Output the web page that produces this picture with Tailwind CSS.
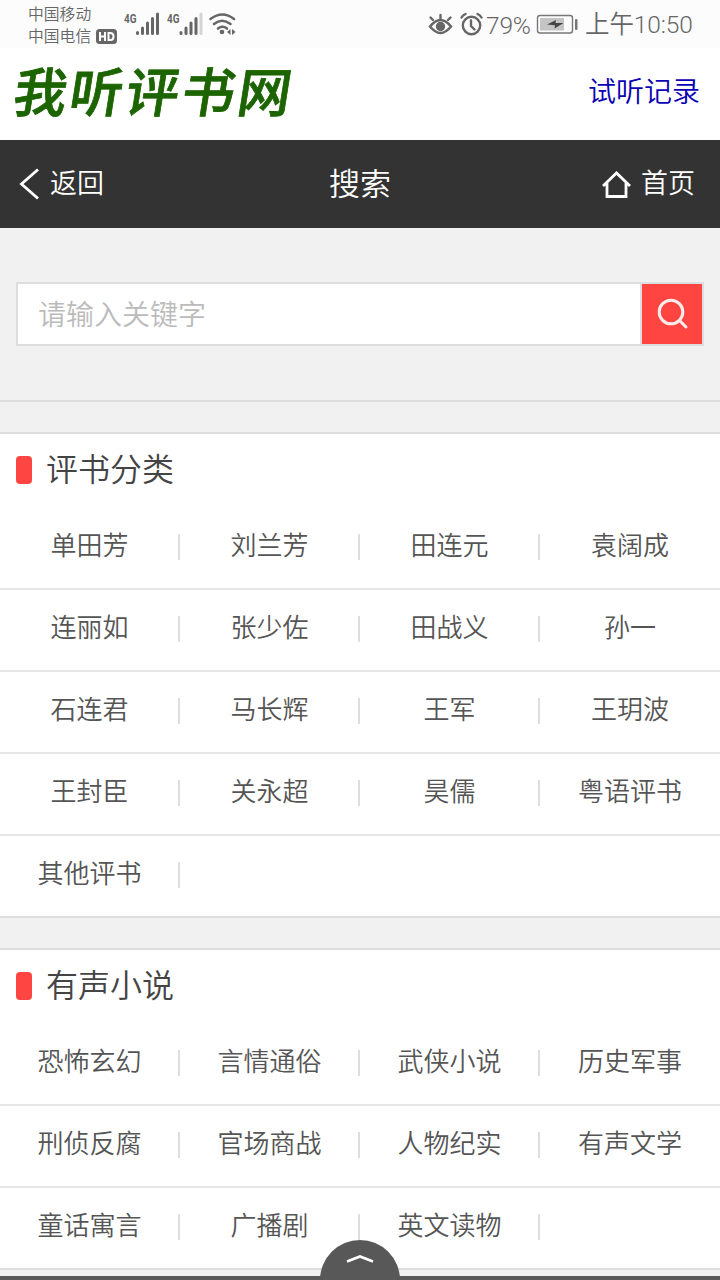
<!DOCTYPE html>
<html lang="zh-CN">
<head>
    <meta charset="UTF-8">
    <meta name="viewport" content="width=device-width, initial-scale=1.0">
    <title>搜索 - 我听评书网</title>
    <script src="https://cdn.jsdelivr.net/npm/@tailwindcss/browser@4"></script>
</head>
<body class="relative h-[1280px] overflow-hidden bg-[#f1f1f1] font-['Noto_Sans_CJK_SC',sans-serif] text-[#555]">

    <!-- Status bar -->
    <div class="flex h-12 justify-between bg-[#fcfcfc] pl-7 pr-7 text-[#666]">
        <div class="flex">
            <div class="pt-[3px] text-[15.8px] leading-[22px] font-[350]">
                <div>中国移动</div>
                <div class="flex items-center">
                    <span>中国电信</span>
                    <svg class="ml-[5px] h-[15px] w-[21px]" viewBox="0 0 21 15">
                        <rect width="21" height="15" rx="3.5" fill="#666"/>
                        <path d="M4 3v9M9 3v9M4 7.500h5M12.500 4v7h2q3 0 3-3.500t-3-3.500z" fill="none" stroke="#fcfcfc" stroke-width="2"/>
                    </svg>
                </div>
            </div>
            <!-- Signal -->
            <svg class="ml-[3px] h-12 w-[120px]" viewBox="120 0 120 48" fill="#666">
                <g font-family="Roboto, sans-serif" font-size="13" font-weight="700">
                    <text x="124" y="22.500" textLength="12.500" lengthAdjust="spacingAndGlyphs">4G</text>
                    <text x="167" y="22.500" textLength="12.500" lengthAdjust="spacingAndGlyphs">4G</text>
                </g>
                <g stroke="#666" stroke-width="3" stroke-linecap="round">
                    <path d="M137.500 32.500v1M142.500 28v5.500M147.500 23v10.500M152.500 18.500v15M157.500 14v19.500"/>
                    <path d="M181 32.500v1M186 28v5.500M191 23v10.500M196 18.500v15"/>
                    <path d="M201 14v19.500" stroke="#d4d4d4"/>
                </g>
                <g fill="none" stroke="#666" stroke-width="2.600" stroke-linecap="round">
                    <path d="M210.500 19q12-9 23.500 0M214 24q8-6.500 16.500 0M218 28.500q4.500-3.500 9 0"/>
                </g>
                <circle cx="222" cy="32" r="2.300"/>
                <path d="M230.500 29v6l-3.500-3zM232 29v6l3.500-3z"/>
            </svg>
        </div>
        <div class="flex">
            <svg class="h-12 w-[60px]" viewBox="425 0 60 48" fill="none" stroke="#666" stroke-width="2.400" stroke-linecap="round">
                <path d="M430 26.500q10.500-13 21 0q-10.500 13-21 0z"/>
                <circle cx="440.500" cy="26.500" r="3.500" fill="#666"/>
                <path d="M440.500 18.500v-3.500M433 20l-2.500-2.500M448 20l2.500-2.500"/>
                <circle cx="471.500" cy="25.500" r="8.700"/>
                <path d="M471 20.500v5.500l3.500 3.500M461.500 17.500q1.500-2.500 4-3.500M477.500 14q2.500 1 4 3.500"/>
            </svg>
            <span class="w-[45px] pl-[1px] pt-[2px] font-['Roboto',sans-serif] text-[24.500px] leading-12 font-light tracking-[-0.2px]">79%</span>
            <svg class="ml-[5px] h-12 w-[43px]" viewBox="535 0 43 48">
                <rect x="537.500" y="15.500" width="35" height="17.500" rx="2.500" fill="none" stroke="#777" stroke-width="1.400"/>
                <rect x="540" y="18" width="24" height="12.500" fill="#c4c4c4"/>
                <path d="M547 24.500l9-4.500-.5 3h8l-9 5.500.5-3.200z" fill="#444"/>
                <rect x="575" y="19" width="2.500" height="11" rx="1" fill="#777"/>
            </svg>
            <span class="ml-[7px] w-[107px] whitespace-nowrap pt-[1px] font-['Roboto','Noto_Sans_CJK_SC',sans-serif] text-[24.500px] leading-12 font-[350] tracking-[-0.1px]">上午10:50</span>
        </div>
    </div>

    <!-- Header -->
    <header class="flex h-[92px] justify-between bg-white pl-3 pr-5">
        <h1 class="-skew-x-[9deg] pl-[2px] text-[53px] leading-[82px] font-medium tracking-[3px] text-[#1c6400] [-webkit-text-stroke:0.8px_#1c6400]">我听评书网</h1>
        <a href="#" class="text-[28px] leading-[84px] font-[350] text-[#0a00b4]">试听记录</a>
    </header>

    <!-- Nav -->
    <nav class="grid h-[88px] grid-cols-3 items-center bg-[#333] text-[27px] text-white">
        <a href="#" class="flex items-center pl-[18px]">
            <svg class="h-8 w-[22px]" viewBox="0 0 22 32" fill="none" stroke="#fff" stroke-width="2.800">
                <path d="M20 1.500L3.500 16L20 30.500"/>
            </svg>
            <span class="ml-2.5 pb-1 font-[350]">返回</span>
        </a>
        <span class="pb-1 text-center text-[31px] font-[350]">搜索</span>
        <a href="#" class="flex items-center justify-end pr-[25px]">
            <svg class="mt-0.5 h-8 w-8" viewBox="0 0 32 32" fill="none" stroke="#fff" stroke-width="2.800">
                <path d="M2 17L15.500 4L29 17M6 14v13.500h19V14"/>
            </svg>
            <span class="ml-2 pb-1 font-[350]">首页</span>
        </a>
    </nav>

    <!-- Search form -->
    <form class="h-[174px] border-b-2 border-[#dedede] px-4 pt-[54px]">
        <div class="flex h-16 border-2 border-[#dedede] bg-white">
            <input type="text" placeholder="请输入关键字" class="min-w-0 flex-1 px-5 pb-0.5 text-[28px] font-[350] outline-none placeholder:text-[#bbb]">
            <button type="button" class="box-content flex w-[60px] items-center justify-center border-l-2 border-[#e2dcdc] bg-[#ff4542]">
                <svg class="ml-0.5 size-8" viewBox="0 0 32 32" fill="none" stroke="#ffeceb" stroke-width="3" stroke-linecap="round">
                    <circle cx="14" cy="14" r="11.800"/>
                    <path d="M23 23l6 6"/>
                </svg>
            </button>
        </div>
    </form>

    <!-- 评书分类 -->
    <section class="mt-[30px] border-y-2 border-[#dedede] bg-white">
        <h2 class="flex h-[74px] pl-4 text-[32px] leading-[66px] font-[350] text-[#444]">
            <i class="mt-[22px] mr-3.5 h-7 w-4 rounded bg-[#ff4542]"></i>评书分类
        </h2>
        <ul class="grid grid-cols-4 text-center text-[26px] leading-[71px] font-[350] [&_a:not(:last-child)]:mr-px [&>li]:relative [&>li]:h-[82px] [&>li]:border-b-2 [&>li]:border-[#e6e6e6] [&>li:nth-child(n+17)]:h-20 [&>li:nth-child(n+17)]:border-b-0 [&_i]:absolute [&_i]:right-0 [&_i]:top-[26px] [&_i]:h-[26px] [&_i]:w-0.5 [&_i]:bg-[#dedede]">
            <li><a href="#">单田芳</a><i></i></li>
            <li><a href="#">刘兰芳</a><i></i></li>
            <li><a href="#">田连元</a><i></i></li>
            <li><a href="#">袁阔成</a></li>
            <li><a href="#">连丽如</a><i></i></li>
            <li><a href="#">张少佐</a><i></i></li>
            <li><a href="#">田战义</a><i></i></li>
            <li><a href="#">孙一</a></li>
            <li><a href="#">石连君</a><i></i></li>
            <li><a href="#">马长辉</a><i></i></li>
            <li><a href="#">王军</a><i></i></li>
            <li><a href="#">王玥波</a></li>
            <li><a href="#">王封臣</a><i></i></li>
            <li><a href="#">关永超</a><i></i></li>
            <li><a href="#">昊儒</a><i></i></li>
            <li><a href="#">粤语评书</a></li>
            <li><a href="#">其他评书</a><i></i></li>
        </ul>
    </section>

    <!-- 有声小说 -->
    <section class="mt-[30px] border-y-2 border-[#dedede] bg-white">
        <h2 class="flex h-[74px] pl-4 text-[32px] leading-[66px] font-[350] text-[#444]">
            <i class="mt-[22px] mr-3.5 h-7 w-4 rounded bg-[#ff4542]"></i>有声小说
        </h2>
        <ul class="grid grid-cols-4 text-center text-[26px] leading-[71px] font-[350] [&_a:not(:last-child)]:mr-px [&>li]:relative [&>li]:h-[82px] [&>li]:border-b-2 [&>li]:border-[#e6e6e6] [&>li:nth-child(n+9)]:h-20 [&>li:nth-child(n+9)]:border-b-0 [&_i]:absolute [&_i]:right-0 [&_i]:top-[26px] [&_i]:h-[26px] [&_i]:w-0.5 [&_i]:bg-[#dedede]">
            <li><a href="#">恐怖玄幻</a><i></i></li>
            <li><a href="#">言情通俗</a><i></i></li>
            <li><a href="#">武侠小说</a><i></i></li>
            <li><a href="#">历史军事</a></li>
            <li><a href="#">刑侦反腐</a><i></i></li>
            <li><a href="#">官场商战</a><i></i></li>
            <li><a href="#">人物纪实</a><i></i></li>
            <li><a href="#">有声文学</a></li>
            <li><a href="#">童话寓言</a><i></i></li>
            <li><a href="#">广播剧</a><i></i></li>
            <li><a href="#">英文读物</a><i></i></li>
        </ul>
    </section>

    <!-- Bottom drawer handle -->
    <div class="absolute inset-x-0 bottom-0 flex h-10 justify-center border-b-4 border-[#585858]">
        <div class="h-10 w-20 shrink-0 rounded-t-full bg-[#585858]">
            <svg class="mx-auto mt-3.5 h-3 w-7" viewBox="0 0 28 12" fill="none" stroke="#fff" stroke-width="2.600">
                <path d="M1 7.500L14 2.500L27 7.500"/>
            </svg>
        </div>
    </div>
</body>
</html>
